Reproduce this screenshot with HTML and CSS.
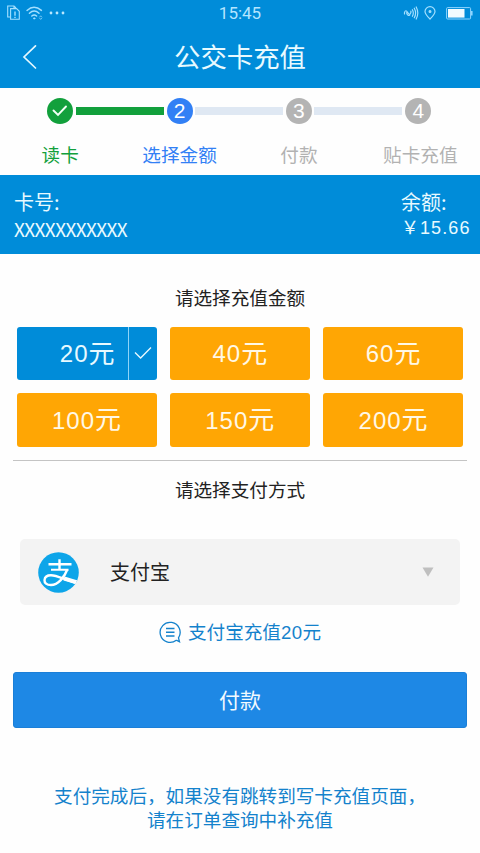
FILE: index.html
```html
<!DOCTYPE html>
<html lang="zh-CN">
<head>
<meta charset="utf-8">
<title>公交卡充值</title>
<link rel="stylesheet" href="styles.css">
</head>
<body>
<div class="screen">
  <header class="header">
    <div class="status">
      <div class="status-left">
        <svg width="14" height="16" viewBox="0 0 14 16" fill="none" stroke="#a4e0ff" stroke-width="1.1"><path d="M3 12H.7V1H7l2 2M7 1v2.5"/><path d="M3.600 3.600h6l2.700 2.700v8H3.600z"/><path d="M8 6.500v4.300M8 11.800v1.200" stroke-width="1.400"/></svg>
        <svg width="18" height="16" viewBox="0 0 18 16" fill="none" stroke="#a4e0ff" stroke-width="1.400" stroke-linecap="round"><path d="M1 5.400q7-6.400 14.400 0M3.400 8.300q4.800-4.500 9.600 0M5.800 11q2.400-2 4.800 0"/><circle cx="8.200" cy="13.400" r=".7" fill="#a4e0ff" stroke-width=".8"/><path d="M13.700 12l1-1.200 1 1.200M13.700 13.200l1 1.200 1-1.200" stroke-width=".7"/></svg>
        <svg class="dots" width="16" height="4" viewBox="0 0 16 4" fill="#b9e7ff"><circle cx="2" cy="2" r="1.400"/><circle cx="8" cy="2" r="1.400"/><circle cx="14" cy="2" r="1.400"/></svg>
      </div>
      <div class="clock">15:45</div>
      <div class="status-right">
        <svg width="16" height="14" viewBox="0 0 16 14" fill="none" stroke="#a4e0ff" stroke-width="1.200" stroke-linecap="round"><path d="M1.500 8V6.500q1.200-3.500 3.200 0t3.200 0V5M3.800 6v1.500q1 2.800 3 1.400M9.400 3.700q1.800 3.300 0 6.600M11.300 2.200q2.600 4.800 0 9.600M13.200 1q3.200 6 0 12"/></svg>
        <svg width="12" height="14" viewBox="0 0 12 14" fill="none" stroke="#a4e0ff" stroke-width="1.200"><path d="M6 13C3.600 10.400 1 8.400 1 5.600a5 5 0 0 1 10 0C11 8.400 8.400 10.400 6 13z"/><circle cx="6" cy="5.400" r=".9" fill="#a4e0ff"/></svg>
        <svg class="battery" width="27" height="13" viewBox="0 0 27 13"><rect x=".6" y=".6" width="24" height="11.400" rx="1" fill="none" stroke="#8fd6ff"/><path d="M2 2h16.500v8.600H2z" fill="#f2fbff"/><path d="M25 4h1.600v4.600H25z" fill="#8fd6ff"/></svg>
      </div>
    </div>
    <div class="titlebar">
      <svg class="back" width="16" height="26" viewBox="0 0 16 26" fill="none" stroke="#e4f8ff" stroke-width="1.700" stroke-linecap="round"><path d="M13.500 1.800L2 13l11.500 11"/></svg>
      <h1 class="title">公交卡充值</h1>
    </div>
  </header>

  <ol class="steps">
    <li class="step done">
      <span class="badge"><svg width="16" height="12" viewBox="0 0 16 12" fill="none" stroke="#f2fff5" stroke-width="1.900" stroke-linecap="round"><path d="M1.500 5.500l4.500 4.500 8-8.500"/></svg></span>
      <span class="label">读卡</span>
    </li>
    <li class="step active"><span class="badge">2</span><span class="label">选择金额</span></li>
    <li class="step"><span class="badge">3</span><span class="label">付款</span></li>
    <li class="step"><span class="badge">4</span><span class="label last">贴卡充值</span></li>
  </ol>

  <section class="card-info">
    <div><div class="info-label">卡号:</div><div class="card-number">XXXXXXXXXXX</div></div>
    <div class="balance"><div class="info-label">余额:</div><div class="amount"><span class="yen">￥</span><span class="figures">15.66</span></div></div>
  </section>

  <h2 class="heading">请选择充值金额</h2>
  <div class="options">
    <div class="option selected"><span class="value"><span class="num">20</span><span class="unit">元</span></span><span class="check"><svg width="18" height="14" viewBox="0 0 18 14" fill="none" stroke="#e8faff" stroke-width="1.300"><path d="M1 6.500l5.600 5.500L17 1.500"/></svg></span></div>
    <div class="option"><span class="num">40</span><span class="unit">元</span></div>
    <div class="option"><span class="num">60</span><span class="unit">元</span></div>
    <div class="option"><span class="num">100</span><span class="unit">元</span></div>
    <div class="option"><span class="num">150</span><span class="unit">元</span></div>
    <div class="option"><span class="num">200</span><span class="unit">元</span></div>
  </div>

  <h2 class="heading pay-heading">请选择支付方式</h2>
  <div class="method">
    <svg class="logo" width="41" height="41" viewBox="0 0 41 41"><defs><clipPath id="disc"><circle cx="20.500" cy="20.500" r="20.300"/></clipPath></defs><circle cx="20.500" cy="20.500" r="20.300" fill="#0da5e9"/><g clip-path="url(#disc)" fill="none" stroke="#fff"><path d="M10.500 12.200h23M21.500 7.300v10" stroke-width="2.400"/><path d="M13 17.800h17.500" stroke-width="1.900"/><path d="M29.300 17.500C26.500 25 20 33 13 33c-4.500 0-6.700-2.200-6.500-5 .3-3 3-4.800 6.500-4.800 5.500 0 9 2.500 25 8" stroke-width="2.400"/><path d="M26 26.500l14 4.200" stroke-width="4"/></g></svg>
    <span class="method-name">支付宝</span>
    <svg class="arrow" width="12" height="10" viewBox="0 0 12 10"><path d="M.5.500h11L6 9.800z" fill="#bfbfbf"/></svg>
  </div>
  <div class="summary">
    <svg width="23" height="23" viewBox="0 0 23 23" fill="none" stroke="#1482cc" stroke-width="1.300"><path d="M17.300 19.200a10 10 0 1 1 2.200-2.400l1 4-3.200-1.600"/><path d="M7 7.500h8.500M7 11.200h8.500M7 14.900h8.500" stroke-width="1.500"/></svg>
    <span>支付宝充值<span class="sum-num">20</span>元</span>
  </div>
  <button class="pay">付款</button>
  <p class="note">支付完成后，如果没有跳转到写卡充值页面，<br>请在订单查询中补充值</p>
</div>
</body>
</html>
```
FILE: styles.css
```css
* { box-sizing: border-box; }
body {
  margin: 0;
  background: #fff;
  font-family: "Noto Sans CJK SC", sans-serif;
  font-weight: 400;
}
svg { display: block; }
.screen { width: 480px; height: 853px; overflow: hidden; background: #fefefe; }

.header { height: 88px; background: #008cd9; color: #e8faff; }
.status {
  height: 26px;
  display: grid;
  grid-template-columns: 1fr auto 1fr;
  align-items: center;
  padding: 0 7px;
}
.status-left, .status-right { display: flex; align-items: center; }
.status-left { gap: 5px; }
.clock { font: 17px/26px Roboto, sans-serif; color: #b4e5ff; }
.status-right { justify-content: flex-end; gap: 5px; }
.battery { margin-left: 5px; }
.titlebar { height: 62px; display: grid; grid-template-columns: 60px 1fr 60px; align-items: center; }
.back { margin-left: 22px; }
.title { margin: 0; padding-bottom: 2px; text-align: center; font-size: 26.4px; line-height: 60px; font-weight: 400; }

.steps {
  height: 87px;
  margin: 0;
  padding: 10px 2px 0 0.5px;
  list-style: none;
  display: grid;
  grid-template-columns: repeat(4, 1fr);
}
.step { position: relative; display: flex; flex-direction: column; align-items: center; color: #b2b2b2; }
.step + .step::before {
  content: "";
  position: absolute;
  top: 9px;
  right: calc(50% + 16px);
  width: 88px;
  height: 8px;
  background: #dfe8f3;
}
.step.done + .step::before { background: #12a03c; }
.badge {
  width: 26px;
  height: 26px;
  border-radius: 50%;
  display: flex;
  align-items: center;
  justify-content: center;
  background: #b4b4b4;
  color: #fff;
  font: 21px/26px "Liberation Sans", sans-serif;
}
.label { margin-top: 16px; font-size: 18.6px; line-height: 28px; white-space: nowrap; }
.last { padding-left: 4px; }
.done { color: #12a03c; }
.done .badge { background: #12a03c; }
.active { color: #3280f5; }
.active .badge { background: #3280f5; }

.card-info {
  height: 79px;
  padding: 13px 9px 0 14px;
  display: flex;
  justify-content: space-between;
  background: #008cd9;
  color: #e8faff;
}
.info-label { font-size: 20px; line-height: 28px; }
.card-number { font-size: 19px; line-height: 26px; letter-spacing: -0.6px; }
.balance { width: 70px; }
.amount { display: flex; font-size: 18px; line-height: 24px; white-space: nowrap; }
.yen { margin-top: -2px; width: 19px; }
.figures { font-family: "Liberation Sans", sans-serif; letter-spacing: 1.1px; }

.heading { margin: 30px 0 0; text-align: center; font-size: 18.6px; line-height: 28px; font-weight: 400; color: #222; }
.options {
  margin: 14.5px 13px 0;
  padding: 0 3.5px 13px;
  display: grid;
  grid-template-columns: repeat(3, 140px);
  grid-auto-rows: 53.5px;
  gap: 13px 13.3px;
  border-bottom: 1.5px solid #c4c4c4;
}
.option {
  display: flex;
  align-items: center;
  justify-content: center;
  border-radius: 3px;
  background: #ffa604;
  color: #fff8e6;
}
.num { padding-top: 2px; font: 24px/30px "Liberation Sans", sans-serif; letter-spacing: 1px; }
.unit { padding-bottom: 3px; font-size: 26px; line-height: 30px; }
.selected { background: #008cd9; color: #e8faff; justify-content: space-between; }
.value { flex: 1; padding-right: 13px; display: flex; align-items: center; justify-content: flex-end; }
.check { width: 29px; height: 100%; border-left: 1px solid #8fd4f8; display: flex; align-items: center; justify-content: center; }
.card-info + .heading { margin-top: 29px; margin-bottom: 15.5px; }
.heading + .options { margin-top: 0; }
.pay-heading { margin-top: 14px; }

.method {
  height: 66px;
  margin: 36.5px 20px 0;
  padding: 0 26px 0 18px;
  display: flex;
  align-items: center;
  border-radius: 5px;
  background: #f3f3f3;
}
.method-name { margin-left: 31px; font-size: 20px; line-height: 30px; color: #222; }
.arrow { margin-left: auto; }
.summary {
  height: 28px;
  margin-top: 13px;
  display: flex;
  justify-content: center;
  align-items: center;
  gap: 6px;
  color: #1482cc;
  font-size: 18.6px;
  line-height: 28px;
}
.sum-num { font-family: "Liberation Sans", sans-serif; letter-spacing: 0.4px; }
.pay {
  display: block;
  width: 454px;
  height: 56px;
  margin: 25.5px 13px 0;
  padding: 0 0 2px;
  border: 1px solid #1b7fd8;
  border-radius: 3px;
  background: #1e88e5;
  color: #f2faff;
  font: 21px/52px "Noto Sans CJK SC", sans-serif;
}
.note { margin: 55px 0 0; text-align: center; color: #1482cc; font-size: 18.6px; line-height: 24px; white-space: nowrap; }
```
